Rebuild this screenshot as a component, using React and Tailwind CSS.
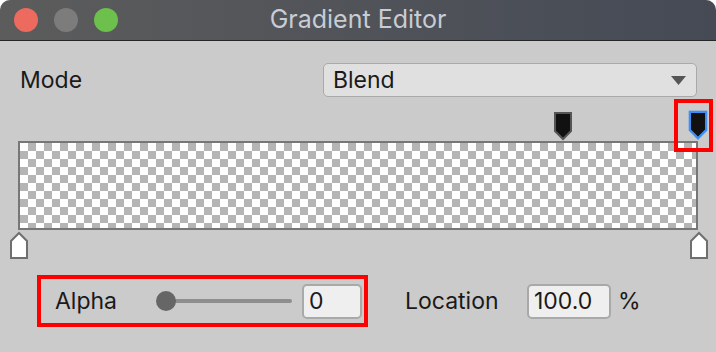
import React from 'react';

const font = { fontFamily: 'Inter, "Noto Sans", sans-serif' };

const TopStop = ({ selected }) => (
    <svg width="20" height="30" viewBox="0 0 20 30">
        {selected && (
            <path d="M2 2 H18 V20 L10 28 L2 20 Z" fill="none" stroke="#3f8ff0" strokeWidth="3" opacity="0.6" />
        )}
        <path
            d="M2 2 H18 V20 L10 28 L2 20 Z"
            fill="#111111"
            stroke={selected ? '#3a8ef5' : '#555555'}
            strokeWidth="2"
        />
    </svg>
);

const BottomStop = () => (
    <svg width="20" height="29" viewBox="0 0 20 29">
        <path d="M2 10 L10 2 L18 10 V27 H2 Z" fill="#ffffff" stroke="#6f6f6f" strokeWidth="2" />
    </svg>
);

const App = () => {
    return (
        <div className="w-[716px] h-[352px] bg-white overflow-hidden" style={font}>
            <div className="w-full h-full bg-[#cbcbcb] rounded-t-[10px] overflow-hidden flex flex-col">
                {/* Title bar */}
                <div className="relative h-[41px] shrink-0 flex items-center bg-gradient-to-r from-[#5c5c5c] to-[#454a55] border-b border-[#262626]">
                    <div className="flex items-center gap-[16px] pl-[14px]">
                        <span className="w-[24px] h-[24px] rounded-full bg-[#ec6a5e]"></span>
                        <span className="w-[24px] h-[24px] rounded-full bg-[#7c7c7c]"></span>
                        <span className="w-[24px] h-[24px] rounded-full bg-[#6dc04b]"></span>
                    </div>
                    <div className="absolute inset-0 flex items-center justify-center text-[25px] text-[#c8ccd4] pointer-events-none">
                        Gradient Editor
                    </div>
                </div>

                {/* Mode row */}
                <div className="mt-[22px] h-[34px] flex items-center pl-[20px] pr-[19px]">
                    <span className="text-[23px] text-[#1a1a1a]">Mode</span>
                    <div className="ml-auto w-[374px] h-[34px] bg-[#e0e0e0] border border-[#a9a9a9] rounded-[5px] flex items-center pl-[9px] pr-[10px]">
                        <span className="text-[23px] text-[#1a1a1a]">Blend</span>
                        <svg className="ml-auto" width="15" height="9" viewBox="0 0 15 9">
                            <path d="M0 0 H15 L7.5 9 Z" fill="#555555" />
                        </svg>
                    </div>
                </div>

                {/* Alpha stops */}
                <div className="relative h-[44px] shrink-0">
                    <div className="absolute left-[553px] top-[14px]">
                        <TopStop />
                    </div>
                    <div className="absolute left-[688px] top-[13px]">
                        <TopStop selected />
                    </div>
                    <div className="absolute left-[674px] top-[2px] w-[39px] h-[53px] border-[4px] border-[#ff0000] z-10"></div>
                </div>

                {/* Gradient preview */}
                <div className="ml-[18px] w-[680px] h-[89px] shrink-0 border-2 border-[#777777] bg-[image:repeating-conic-gradient(#b5b5b5_0_25%,#ffffff_0_50%)] bg-[length:16px_16px]"></div>

                {/* Colour stops */}
                <div className="relative h-[45px] shrink-0">
                    <div className="absolute left-[9px] top-[1px]">
                        <BottomStop />
                    </div>
                    <div className="absolute left-[689px] top-[1px]">
                        <BottomStop />
                    </div>
                </div>

                {/* Alpha + Location */}
                <div className="flex items-center h-[52px]">
                    <div className="ml-[37px] w-[331px] h-[52px] border-[4px] border-[#ff0000] flex items-center pl-[14px] pr-[2px]">
                        <span className="text-[23px] text-[#1a1a1a] w-[101px]">Alpha</span>
                        <div className="relative w-[136px] h-[20px] flex items-center">
                            <div className="absolute left-[10px] right-[0px] h-[4px] bg-[#8e8e8e] rounded-full"></div>
                            <div className="relative w-[20px] h-[20px] rounded-full bg-[#666666]"></div>
                        </div>
                        <div className="ml-[10px] w-[60px] h-[35px] bg-[#efefef] border-2 border-[#a9a9a9] rounded-[5px] flex items-center pl-[5px] text-[23px] text-[#1a1a1a]">
                            0
                        </div>
                    </div>
                    <span className="ml-[37px] w-[96px] text-[23px] text-[#1a1a1a] whitespace-nowrap">Location</span>
                    <div className="ml-[26px] w-[84px] h-[35px] bg-[#efefef] border-2 border-[#a9a9a9] rounded-[5px] flex items-center pl-[5px] text-[23px] text-[#1a1a1a]">
                        100.0
                    </div>
                    <span className="ml-[7px] text-[23px] text-[#1a1a1a]">%</span>
                </div>
            </div>
        </div>
    );
};

export default App;
